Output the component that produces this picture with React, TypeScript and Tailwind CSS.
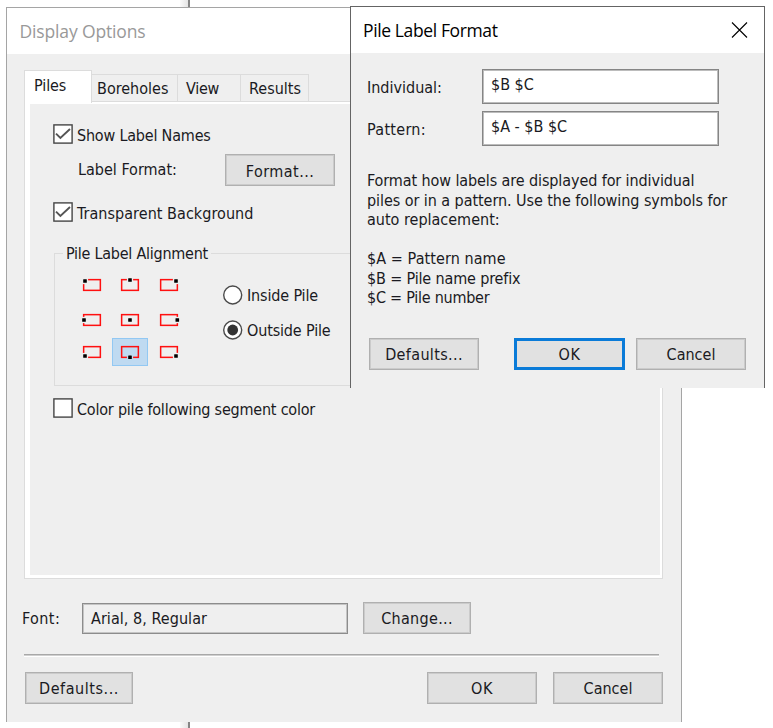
import { useState, type ReactNode } from 'react'
import clsx from 'clsx'

type Dot = { id: string; x: number; y: number }

// dot centre inside the 24x20 icon
const alignments: Dot[] = [
  { id: 'top-left', x: 5, y: 6 },
  { id: 'top', x: 12, y: 5 },
  { id: 'top-right', x: 19, y: 6 },
  { id: 'left', x: 4, y: 10 },
  { id: 'center', x: 12, y: 10 },
  { id: 'right', x: 20.3, y: 10 },
  { id: 'bottom-left', x: 5, y: 14 },
  { id: 'bottom', x: 12, y: 15.3 },
  { id: 'bottom-right', x: 19, y: 14 },
]

function AlignIcon({ dot, selected }: { dot: Dot; selected: boolean }) {
  return (
    <svg width="24" height="20" viewBox="0 0 24 20">
      <rect x="3.65" y="4.65" width="16.7" height="10.7" fill="none" stroke="#ff1010" strokeWidth="1.5" />
      {dot.id !== 'center' && (
        <rect x={dot.x - 3.1} y={dot.y - 3.1} width="6.2" height="6.2" fill={selected ? '#bfdaf1' : '#efefef'} />
      )}
      <rect x={dot.x - 1.8} y={dot.y - 1.8} width="3.6" height="3.6" rx="0.4" fill="#000" />
    </svg>
  )
}

function Button({ children, className, primary }: { children: ReactNode; className?: string; primary?: boolean }) {
  return (
    <button
      type="button"
      className={clsx(
        'flex h-8 shrink-0 items-center justify-center bg-[#e1e1e1] pt-0.5',
        primary
          ? 'border-3 border-[#0a7bd8]'
          : 'border border-[#b0b0b0] shadow-[inset_0_0_0_1px_#cbcbcb]',
        className,
      )}
    >
      {children}
    </button>
  )
}

function Checkbox({ label, checked, onChange, className }: {
  label: string
  checked: boolean
  onChange: () => void
  className?: string
}) {
  return (
    <button type="button" onClick={onChange} className={clsx('flex h-5 items-center', className)}>
      <svg width="20" height="20" viewBox="0 0 20 20" className="shrink-0">
        <rect x="0.9" y="0.9" width="18.2" height="18.2" fill="#fff" stroke="#454545" strokeWidth="1.4" />
        {checked && <path d="M3 9.6 L7.4 14 L17 5" fill="none" stroke="#555" strokeWidth="1.9" />}
      </svg>
      <span className="ml-1 pt-[3px]">{label}</span>
    </button>
  )
}

function Radio({ label, checked, onChange }: { label: string; checked: boolean; onChange: () => void }) {
  return (
    <button type="button" onClick={onChange} className="flex h-5 items-center tracking-[-0.15px]">
      <svg width="20" height="20" viewBox="0 0 20 20" className="shrink-0">
        <circle cx="9.7" cy="10" r="9" fill="#fff" stroke="#4a4a4a" strokeWidth="1.4" />
        {checked && <circle cx="9.7" cy="10" r="5.4" fill="#333" />}
      </svg>
      <span className="ml-1 pt-0.5">{label}</span>
    </button>
  )
}

function DisplayOptions() {
  const [showNames, setShowNames] = useState(true)
  const [transparent, setTransparent] = useState(true)
  const [colorPile, setColorPile] = useState(false)
  const [align, setAlign] = useState('bottom')
  const [placement, setPlacement] = useState('outside')

  return (
    <section className="absolute left-[6px] top-[7px] h-[715px] w-[676px] border-x border-t border-[#a5a5a5] bg-[#efefef]">
      <header className="flex h-[46px] items-center bg-white pl-[12.5px] font-['Open_Sans',sans-serif] text-[17.5px] tracking-[-0.15px] text-[#999]">
        <span>Display Options</span>
      </header>

      <div className="px-[17px] pt-4">
        <nav className="flex h-[31px] items-end">
          <div className="relative -mb-[2px] h-[33px] w-[68px] border-x border-t border-[#dcdcdc] bg-white pl-[9px] pt-[5px] tracking-[-0.1px]">Piles</div>
          <div className="h-[27px] w-[86px] border-r border-t border-[#dcdcdc] pl-[5px] pt-1">Boreholes</div>
          <div className="h-[27px] w-[63px] border-r border-t border-[#dcdcdc] pl-[8px] pt-1 tracking-[-0.3px]">View</div>
          <div className="h-[27px] w-[68px] border-r border-t border-[#dcdcdc] pl-[8px] pt-1">Results</div>
        </nav>

        <div className="h-[478px] w-[639px] border border-[#dcdcdc] bg-white pb-[3px] pl-[5px] pr-[2px] pt-[2px]">
          <div className="h-full bg-[#efefef] pl-[23px] pt-5">
            <Checkbox label="Show Label Names" checked={showNames} onChange={() => setShowNames(!showNames)} className="tracking-[-0.2px]" />
            <div className="mt-[10px] flex h-8 items-center pl-[25px]">
              <span className="w-[147px]">Label Format:</span>
              <Button className="w-[110px] pt-[4px] tracking-[0.45px]">Format...</Button>
            </div>
            <Checkbox label="Transparent Background" checked={transparent} onChange={() => setTransparent(!transparent)} className="mt-4 tracking-[0.05px]" />

            <fieldset className="ml-px mt-[21px] h-[143px] w-[560px] border border-[#dcdcdc]">
              <legend className="ml-2 px-[3px] pt-px tracking-[-0.25px]">Pile Label Alignment</legend>
              <div className="flex pl-[18px] pt-[3.5px]">
                <div className="grid grid-cols-[38px_38px_39.5px] grid-rows-[35px_35px_28px] place-items-center">
                  {alignments.map((dot) => (
                    <button
                      key={dot.id}
                      type="button"
                      onClick={() => setAlign(dot.id)}
                      className={clsx(
                        'flex h-7 w-9 items-center justify-center border',
                        align === dot.id ? 'border-[#92c8f3] bg-[#bfdaf1]' : 'border-transparent',
                      )}
                    >
                      <AlignIcon dot={dot} selected={align === dot.id} />
                    </button>
                  ))}
                </div>
                <div className="ml-[34.5px] flex flex-col gap-[14.5px] pt-[17.5px]">
                  <Radio label="Inside Pile" checked={placement === 'inside'} onChange={() => setPlacement('inside')} />
                  <Radio label="Outside Pile" checked={placement === 'outside'} onChange={() => setPlacement('outside')} />
                </div>
              </div>
            </fieldset>

            <Checkbox label="Color pile following segment color" checked={colorPile} onChange={() => setColorPile(!colorPile)} className="mt-3 tracking-[-0.21px]" />
          </div>
        </div>

        <div className="mt-[23px] flex h-8 items-center">
          <span className="-ml-0.5 w-[60px] pt-0.5 tracking-[0.4px]">Font:</span>
          <div className="mr-[15px] flex h-[31px] w-[266px] items-center border border-[#8c8c8c] pl-2 tracking-[0.05px] shadow-[inset_0_0_0_1px_#c4c4c4]">
            <span className="pt-0.5">Arial, 8, Regular</span>
          </div>
          <Button className="w-[108px] tracking-[0.3px]">Change...</Button>
        </div>

        <div className="mt-5 h-[3px] w-[635px] border-b border-t border-b-white border-t-[#a8a8a8] bg-[#cfcfcf]" />

        <div className="mt-[15px] flex pl-px">
          <Button className="w-[108px] tracking-[0.55px]">Defaults...</Button>
          <Button className="ml-[294px] w-[110px] tracking-[0.5px]">OK</Button>
          <Button className="ml-4 w-[110px]">Cancel</Button>
        </div>
      </div>
    </section>
  )
}

function PileLabelFormat() {
  return (
    <section className="absolute left-[350px] top-[6px] h-[382px] w-[415px] border-x border-t border-[#646464] bg-[#efefef]">
      <header className="flex h-[46px] items-center justify-between bg-white pl-3 pr-4 font-['Open_Sans',sans-serif] text-[17.5px] text-black">
        <span className="tracking-[-0.38px]">Pile Label Format</span>
        <svg width="17" height="17" viewBox="0 0 17 17" fill="none" stroke="#000" strokeWidth="1.1">
          <path d="M1 0.5 L16 15.5 M16 0.5 L1 15.5" />
        </svg>
      </header>

      <div className="pl-4 pt-4">
        <div className="flex h-[35px] items-center">
          <span className="w-[115px] pt-0.5">Individual:</span>
          <div className="h-full w-[237px] border border-[#858585] bg-white pl-2 pt-[5px] shadow-[inset_0_0_0_1px_#bcbcbc]">$B $C</div>
        </div>
        <div className="mt-[7px] flex h-[35px] items-center">
          <span className="w-[115px] pt-0.5 tracking-[0.3px]">Pattern:</span>
          <div className="h-full w-[237px] border border-[#858585] bg-white pl-2 pt-[5px] shadow-[inset_0_0_0_1px_#bcbcbc]">$A - $B $C</div>
        </div>

        <div className="mt-[25px] whitespace-pre leading-[19.5px]">
          <p className="tracking-[-0.1px]">Format how labels are displayed for individual</p>
          <p className="tracking-[-0.06px]">piles or in a pattern. Use the following symbols for</p>
          <p>auto replacement:</p>
          <p className="mt-[19.5px] tracking-[0.08px]">$A = Pattern name</p>
          <p className="tracking-[-0.15px]">$B = Pile name prefix</p>
          <p className="tracking-[-0.25px]">$C = Pile number</p>
        </div>

        <div className="mt-[30px] flex pl-0.5">
          <Button className="w-[110px] pt-[3px] tracking-[0.35px]">Defaults...</Button>
          <Button primary className="ml-[35px] w-[111px] pt-[3px] tracking-[0.5px]">OK</Button>
          <Button className="ml-[11px] w-[110px] pt-[3px]">Cancel</Button>
        </div>
      </div>
    </section>
  )
}

export default function App() {
  return (
    <main className="relative h-[728px] w-[773px] overflow-hidden bg-white pl-[180px] font-['DejaVu_Sans_Condensed','DejaVu_Sans',sans-serif] text-[16px] leading-5 text-[#1a1a22]">
      {/* edge of the window behind the dialogs */}
      <div className="h-full w-[10px] border-r-2 border-[#858585] bg-linear-to-r from-[#fafafa] to-[#e4e4e4]" />
      <DisplayOptions />
      <PileLabelFormat />
    </main>
  )
}
